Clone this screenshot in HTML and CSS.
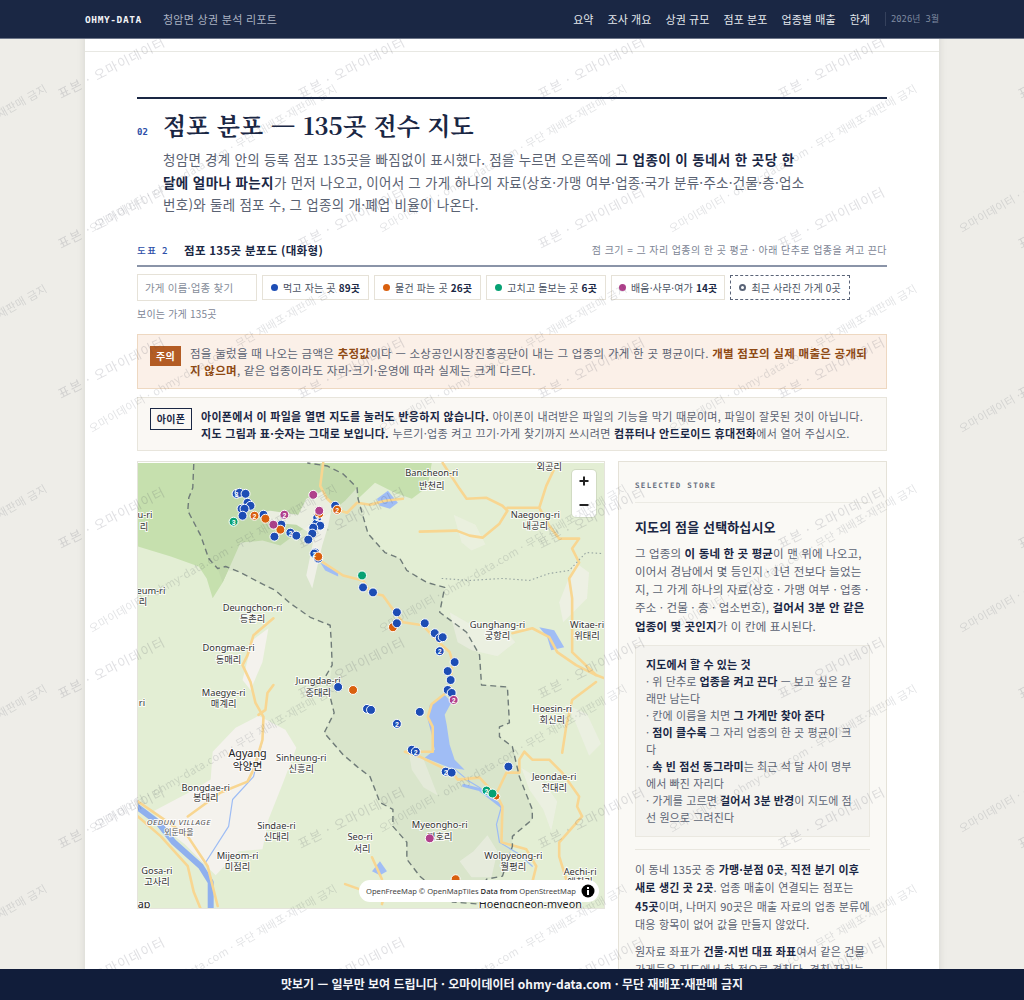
FILE: index.html
```html
<!DOCTYPE html>
<html lang="ko">

<head>
  <meta charset="utf-8">
  <title>청암면 상권 분석 리포트</title>
  <link rel="stylesheet" href="styles.css">
</head>

<body>
  <nav class="topnav">
    <span class="brand">OHMY-DATA</span>
    <span class="subtitle">청암면 상권 분석 리포트</span>
    <div class="nav-links">
      <a>요약</a><a>조사 개요</a><a>상권 규모</a><a>점포 분포</a><a>업종별 매출</a><a>한계</a>
    </div>
    <span class="nav-date">2026년 3월</span>
  </nav>

  <main class="paper">
    <div class="paper-top"></div>
    <section class="section">
      <div class="section-head">
        <span class="section-no">02</span>
        <h2>점포 분포 — 135곳 전수 지도</h2>
      </div>
      <p class="lead">청암면 경계 안의 등록 점포 135곳을 빠짐없이 표시했다. 점을 누르면 오른쪽에 <b>그 업종이 이 동네서 한 곳당 한 달에 얼마나 파는지</b>가 먼저 나오고, 이어서 그 가게 하나의 자료(상호·가맹 여부·업종·국가 분류·주소·건물·층·업소번호)와 둘레 점포 수, 그 업종의 개·폐업 비율이 나온다.</p>

      <div class="fig-head">
        <span class="fig-no">도표 2</span>
        <span class="fig-title">점포 135곳 분포도 (대화형)</span>
        <span class="fig-note">점 크기 = 그 자리 업종의 한 곳 평균 · 아래 단추로 업종을 켜고 끈다</span>
      </div>

      <div class="controls">
        <input type="text" class="search" placeholder="가게 이름·업종 찾기">
        <button class="chip"><i class="dot dot-eat"></i>먹고 자는 곳 <b>89곳</b></button>
        <button class="chip"><i class="dot dot-shop"></i>물건 파는 곳 <b>26곳</b></button>
        <button class="chip"><i class="dot dot-fix"></i>고치고 돌보는 곳 <b>6곳</b></button>
        <button class="chip chip-edu"><i class="dot dot-edu"></i>배움·사무·여가 <b>14곳</b></button>
        <button class="chip chip-closed"><i class="dot dot-closed"></i>최근 사라진 가게 0곳</button>
      </div>
      <p class="visible-count">보이는 가게 135곳</p>

      <div class="notice notice-warn">
        <span class="badge badge-warn">주의</span>
        <p>점을 눌렀을 때 나오는 금액은 <b>추정값</b>이다 — 소상공인시장진흥공단이 내는 그 업종의 가게 한 곳 평균이다. <b>개별 점포의 실제 매출은 공개되지 않으며</b>, 같은 업종이라도 자리·크기·운영에 따라 실제는 크게 다르다.</p>
      </div>
      <div class="notice notice-ios">
        <span class="badge badge-ios">아이폰</span>
        <p><b>아이폰에서 이 파일을 열면 지도를 눌러도 반응하지 않습니다.</b> 아이폰이 내려받은 파일의 기능을 막기 때문이며, 파일이 잘못된 것이 아닙니다. <b>지도 그림과 표·숫자는 그대로 보입니다.</b> 누르기·업종 켜고 끄기·가게 찾기까지 쓰시려면 <b>컴퓨터나 안드로이드 휴대전화</b>에서 열어 주십시오.</p>
      </div>

      <div class="map-row">
        <div class="map">
          <svg class="map-svg" viewBox="137 462 468 447" width="466" height="447">
            <rect class="land" x="137" y="462" width="468" height="447"/>
            <path class="forest" d="M137 462H432L428 486L412 498L395 492L375 482L358 498L330 512L300 530L280 545L262 540L240 542L232 560L222 582L212 598L206 578L198 566L170 556L137 546Z"/>
            <path class="park" d="M193 462L192 487L188 497L187 510L200 535L208 558L217 568L240 572L255 580L275 590L290 603L310 617L330 625L331 640L332 665L328 690L334 713L324 733L343 755L357 767L370 777L380 803L393 810L393 827L407 843L407 860L420 877L433 888L453 903L480 905L487 880L503 877L513 847L513 837L533 820L533 810L520 777L513 747L500 737L500 727L510 723L508 687L482 685L480 655L467 632L440 612L445 587L427 582L407 570L400 558L385 552L368 533L358 498L357 487L343 473L327 465L307 462Z"/>
            <path class="forest-dark" d="M193 462L192 487L188 497L187 510L200 535L208 558L217 568L222 582L232 560L240 542L262 540L280 545L300 530L330 512L345 500L357 487L343 473L327 465L307 462Z"/>

            <g class="urban">
              <path d="M212 752L235 728L258 716L285 730L296 748L282 785L268 820L262 850L238 852L215 876L207 868L184 845L165 830L152 812L190 792L210 780Z"/>
              <path d="M252 640L268 628L262 662L250 690L242 680Z"/>
              <path d="M306 498L322 490L332 505L328 525L322 545L312 588L306 575L314 535L296 524L272 522L258 512L270 510L298 514Z" opacity=".8"/>
              <path d="M450 612L478 628L498 620L516 642L498 656L472 650L458 642Z" opacity=".5"/>
              <path d="M576 562L590 572L588 598L578 608L564 622L560 602Z" opacity=".6"/>
              <path d="M522 768L544 782L558 802L552 832L544 810L530 790Z" opacity=".5"/>
              <path d="M408 748L424 760L438 796L424 788L412 770Z" opacity=".4"/>
              <path d="M488 836L498 852L492 878L472 878L460 862L474 852Z" opacity=".5"/>
              <path d="M454 514L476 524L486 544L472 550L462 542Z" opacity=".4"/>
              <path d="M566 704L588 714L602 744L590 756L576 722Z" opacity=".5"/>
            </g>

            <g class="river-thin">
              <path d="M262 740L253 777L232 800L228 827L205 863"/>
              <path d="M452 767L470 782L480 788L502 807L497 825L500 843L520 855L533 867"/>
            </g>
            <path class="river" d="M137 808L157 823L173 843L200 867L210 883V910"/>
            <path class="river-mid" d="M464 786L480 790L502 807"/>
            <g class="water">
              <path d="M430 705L445 695L452 702L445 715L447 725L450 745L455 760L465 770L450 768L440 764L425 758L435 750L432 735L428 720Z"/>
              <path d="M377 498L388 490L398 502L390 508L380 505Z"/>
              <path d="M540 627L555 630L565 647L552 650L548 637Z"/>
              <path d="M320 562L338 572V576L325 570Z"/>
              <path d="M372 872L380 862L387 872L380 876Z"/>
            </g>

            <g class="road">
              <path d="M443 462L460 488L467 498L487 497L503 505L508 510L500 523L483 537L470 535L457 530L420 531"/>
              <path d="M555 468L547 485L540 507H508M540 507L550 525L560 538L580 538L573 548L580 562L570 578L573 598L573 622L573 652L597 675L605 678"/>
              <path d="M513 633L533 628L550 637L558 652L577 665L597 675"/>
              <path d="M323 462L320 485L327 498L340 510L347 512L357 502L370 504L385 500L403 498"/>
              <path d="M320 560L343 575L363 580L370 592L383 595L390 605L403 622L423 625L437 640L450 652L453 662L450 690L432 704L428 717L433 727L433 752L405 752L420 757L453 773L458 780L480 778L498 797L503 807L502 843L527 850L537 867L533 883"/>
              <path d="M498 792L507 773L520 773L520 760L525 752L533 760L550 760L563 773L580 797L578 807L583 817L560 843L560 857L567 880"/>
              <path d="M597 682L573 700L567 727L563 753"/>
              <path d="M273 618L253 635L247 655L242 665L250 682L255 703L263 717L262 740L253 770L247 782L220 793L187 817"/>
              <path d="M273 685L267 693L265 710L258 715"/>
              <path d="M137 802L163 820L187 837L207 867L217 907"/>
              <path d="M137 817L160 837L187 867L193 893L200 910"/>
              <path d="M345 885L365 892"/>
              <path d="M372 858L382 880M387 885L382 905"/>
            </g>

            <path class="boundary" d="M193 463L192 487L188 497L187 510L200 535L208 558L217 568L225 566L240 572L255 580L275 590L290 603L310 617L330 625L331 640L332 665L325 677L334 713L324 733L343 755L357 767L370 777L380 803L393 810L393 827L407 843L407 860L420 877L433 888L453 903L480 905L487 880L503 877L513 847L513 837L533 820L533 810L520 777L513 747L500 737L500 727L510 723L508 687L482 685L480 655L467 632L440 612L445 587L427 582L407 570L400 558L385 552L368 533L358 498L357 487L343 473L327 465L307 462"/>
            <path class="dotted" d="M442 578L470 580L503 578L530 580L550 573L570 570L587 552L603 553"/>

            <g class="labels">
              <text x="432" y="475">Bancheon-ri</text><text x="432" y="488">반천리</text>
              <text x="550" y="469">외공리</text>
              <text x="536" y="517">Naegong-ri</text><text x="536" y="528">내공리</text>
              <text x="498" y="628">Gunghang-ri</text><text x="498" y="639">궁항리</text>
              <text x="588" y="628">Witae-ri</text><text x="588" y="639">위태리</text>
              <text x="144" y="517">u-ri</text><text x="143" y="529">리</text>
              <text x="150" y="594">eum-ri</text><text x="142" y="605">리</text>
              <text x="252" y="611">Deungchon-ri</text><text x="252" y="622">등촌리</text>
              <text x="228" y="651">Dongmae-ri</text><text x="228" y="663">동매리</text>
              <text x="318" y="684">Jungdae-ri</text><text x="318" y="696">중대리</text>
              <text x="223" y="696">Maegye-ri</text><text x="223" y="707">매계리</text>
              <text x="141" y="706">ri</text>
              <text class="town" x="247" y="757">Agyang</text><text class="town" x="247" y="770">악양면</text>
              <text x="301" y="761">Sinheung-ri</text><text x="301" y="772">신흥리</text>
              <text x="205" y="791">Bongdae-ri</text><text x="205" y="802">봉대리</text>
              <text class="village" x="178" y="826">OEDUN VILLAGE</text><text class="village-ko" x="178" y="836">외둔마을</text>
              <text x="276" y="830">Sindae-ri</text><text x="276" y="841">신대리</text>
              <text x="360" y="841">Seo-ri</text><text x="362" y="853">서리</text>
              <text x="237" y="860">Mijeom-ri</text><text x="237" y="871">미점리</text>
              <text x="156" y="875">Gosa-ri</text><text x="156" y="886">고사리</text>
              <text class="town" x="143" y="909">ap</text>
              <text x="553" y="712">Hoesin-ri</text><text x="553" y="723">회신리</text>
              <text x="555" y="780">Jeondae-ri</text><text x="555" y="791">전대리</text>
              <text x="440" y="829">Myeongho-ri</text><text x="440" y="841">명호리</text>
              <text x="514" y="860">Wolpyeong-ri</text><text x="514" y="871">월평리</text>
              <text x="581" y="876">Aechi-ri</text><text x="581" y="886">애치리</text>
              <text class="town" x="531" y="909">Hoengcheon-myeon</text>
            </g>

            <g class="stores">
              <g class="m-eat">
                <circle cx="236" cy="493" r="4.5"/><circle cx="239" cy="492" r="4.5"/><circle cx="245" cy="493" r="4.5"/><circle cx="247" cy="502" r="4.5"/><circle cx="250" cy="505" r="4.5"/><circle cx="241" cy="508" r="4.5"/><circle cx="244" cy="508" r="4.5"/><circle cx="242" cy="515" r="4.5"/>
                <circle cx="263" cy="514" r="4.5"/><circle cx="281" cy="524" r="4.5"/><circle cx="274" cy="536" r="4.5"/><circle cx="290" cy="532" r="4.5"/><circle cx="296" cy="535" r="4.5"/>
                <circle cx="317" cy="517" r="4.5"/><circle cx="316" cy="523" r="4.5"/><circle cx="320" cy="525" r="4.5"/><circle cx="313" cy="527" r="4.5"/><circle cx="312" cy="533" r="4.5"/><circle cx="308" cy="539" r="4.5"/><circle cx="315" cy="552" r="4.5"/><circle cx="314" cy="553" r="4.5"/><circle cx="318" cy="558" r="4.5"/><circle cx="335" cy="505" r="4.5"/>
                <circle cx="363" cy="587" r="4.5"/><circle cx="373" cy="592" r="4.5"/><circle cx="397" cy="612" r="4.5"/><circle cx="425" cy="623" r="4.5"/><circle cx="435" cy="633" r="4.5"/><circle cx="440" cy="638" r="4.5"/><circle cx="443" cy="637" r="4.5"/><circle cx="440" cy="651" r="4.5"/><circle cx="455" cy="662" r="4.5"/><circle cx="448" cy="671" r="4.5"/><circle cx="451" cy="680" r="4.5"/>
                <circle cx="338" cy="687" r="4.5"/><circle cx="367" cy="709" r="4.5"/><circle cx="371" cy="710" r="4.5"/><circle cx="448" cy="690" r="4.5"/><circle cx="452" cy="693" r="4.5"/><circle cx="420" cy="712" r="4.5"/><circle cx="397" cy="724" r="4.5"/><circle cx="412" cy="750" r="4.5"/><circle cx="416" cy="752" r="4.5"/><circle cx="446" cy="772" r="4.5"/><circle cx="452" cy="773" r="4.5"/><circle cx="509" cy="767" r="4.5"/>
              </g>
              <g class="m-shop">
                <circle cx="254" cy="515" r="4.5"/><circle cx="265" cy="518" r="4.5"/><circle cx="280" cy="529" r="4.5"/><circle cx="319" cy="513" r="4.5"/><circle cx="318" cy="556" r="4.5"/><circle cx="337" cy="509" r="4.5"/><circle cx="393" cy="627" r="4.5"/><circle cx="353" cy="690" r="4.5"/><circle cx="497" cy="797" r="3.5"/><circle cx="456" cy="880" r="4.5"/>
              </g>
              <circle class="m-eat" cx="397" cy="623" r="4.5"/>
              <g class="m-fix">
                <circle cx="233" cy="521" r="4.5"/><circle cx="362" cy="575" r="4.5"/><circle cx="487" cy="791" r="4.5"/><circle cx="493" cy="794" r="4.5"/>
              </g>
              <g class="m-edu">
                <circle cx="273" cy="524" r="4.5"/><circle cx="284" cy="514" r="4.5"/><circle cx="313" cy="494" r="4.5"/><circle cx="319" cy="510" r="4.5"/><circle cx="454" cy="700" r="4.5"/><circle cx="430" cy="839" r="4.5"/>
              </g>
              <g class="counts">
                <text x="236" y="496">3</text><text x="233" y="524">3</text><text x="254" y="518">2</text><text x="284" y="517">2</text><text x="290" y="535">2</text><text x="317" y="520">2</text><text x="314" y="556">2</text><text x="337" y="512">2</text><text x="440" y="654">2</text><text x="454" y="703">2</text><text x="397" y="727">2</text><text x="416" y="755">2</text><text x="446" y="775">2</text><text x="487" y="794">2</text>
              </g>
            </g>
          </svg>
          <div class="zoom-ctl">
            <button class="zoom-btn"><svg viewBox="0 0 12 12" width="12" height="12"><path d="M6 1.5V10.5M1.5 6H10.5"/></svg></button>
            <button class="zoom-btn"><svg viewBox="0 0 12 12" width="12" height="12"><path d="M1.5 6H10.5"/></svg></button>
          </div>
          <div class="attrib">
            <span>OpenFreeMap © OpenMapTiles <b>Data from</b> OpenStreetMap</span>
            <svg class="info" viewBox="0 0 14 14" width="14" height="14"><circle cx="7" cy="7" r="6.5"/><rect x="6" y="6" width="2" height="5"/><rect x="6" y="3" width="2" height="2"/></svg>
          </div>
        </div>

        <aside class="panel">
          <div class="panel-label">SELECTED STORE</div>
          <h3>지도의 점을 선택하십시오</h3>
          <p>그 업종의 <b>이 동네 한 곳 평균</b>이 맨 위에 나오고, 이어서 경남에서 몇 등인지 · 1년 전보다 늘었는지, 그 가게 하나의 자료(상호 · 가맹 여부 · 업종 · 주소 · 건물 · 층 · 업소번호), <b>걸어서 3분 안 같은 업종이 몇 곳인지</b>가 이 칸에 표시된다.</p>
          <div class="howto">
            <strong>지도에서 할 수 있는 것</strong>
            <div>· 위 단추로 <b>업종을 켜고 끈다</b> — 보고 싶은 갈래만 남는다</div>
            <div>· 칸에 이름을 치면 <b>그 가게만 찾아 준다</b></div>
            <div>· <b>점이 클수록</b> 그 자리 업종의 한 곳 평균이 크다</div>
            <div>· <b>속 빈 점선 동그라미</b>는 최근 석 달 사이 명부에서 빠진 자리다</div>
            <div>· 가게를 고르면 <b>걸어서 3분 반경</b>이 지도에 점선 원으로 그려진다</div>
          </div>
          <hr>
          <p class="fine">이 동네 135곳 중 <b>가맹·분점 0곳</b>, <b>직전 분기 이후 새로 생긴 곳 2곳</b>. 업종 매출이 연결되는 점포는 <b>45곳</b>이며, 나머지 90곳은 매출 자료의 업종 분류에 대응 항목이 없어 값을 만들지 않았다.</p>
          <p class="fine">원자료 좌표가 <b>건물·지번 대표 좌표</b>여서 같은 건물 가게들은 지도에서 한 점으로 겹친다. 겹친 자리는 숫자로 표시된다.</p>
        </aside>
      </div>
    </section>
  </main>

  <svg class="watermark" width="1024" height="1000">
    <defs>
      <pattern id="wm-big" width="240" height="150" patternUnits="userSpaceOnUse">
        <text transform="translate(61 99) rotate(-27)">표본 · 오마이데이터</text>
      </pattern>
      <g id="wm-line"><text class="wm-small" transform="translate(92 233) rotate(-30)">오마이데이터 · ohmy-data.com · 무단 재배포·재판매 금지</text></g>
      <pattern id="wm-small" width="290" height="200" patternUnits="userSpaceOnUse">
        <use href="#wm-line"/><use href="#wm-line" y="-200"/>
        <use href="#wm-line" x="-290"/><use href="#wm-line" x="-290" y="-200"/>
      </pattern>
    </defs>
    <rect width="1024" height="1000" fill="url(#wm-big)"/>
    <rect width="1024" height="1000" fill="url(#wm-small)"/>
  </svg>

  <footer class="preview-bar">맛보기 — 일부만 보여 드립니다 · 오마이데이터 ohmy-data.com · 무단 재배포·재판매 금지</footer>
</body>

</html>
```

FILE: styles.css
```css
:root {
  --navy: #1a2744;
  --navy-dark: #111d3a;
  --blue: #2d4fa8;
  --text: #5a6272;
  --muted: #7d8595;
  --line: #e5e2d8;
  --kr: "Noto Sans CJK KR", "Noto Sans", sans-serif;
  --mono: "DejaVu Sans Mono", "Noto Sans CJK KR", monospace;
}

* {
  box-sizing: border-box;
  margin: 0;
  padding: 0;
}

html,
body {
  height: 1000px;
  overflow: hidden;
}

body {
  font-family: var(--kr);
  background-color: #eeede8;
  color: var(--text);
}

b,
strong {
  color: var(--navy);
  font-weight: 700;
}

/* top bar */
.topnav {
  position: fixed;
  top: 0;
  left: 0;
  right: 0;
  height: 39px;
  padding: 0 85px;
  display: flex;
  align-items: center;
  background: var(--navy);
  border-bottom: 1px solid #6d7689;
  z-index: 20;
}

.brand {
  font-family: var(--mono);
  font-size: 9.5px;
  font-weight: 700;
  letter-spacing: 0.6px;
  color: #f2f3f6;
  margin-right: 21px;
}

.subtitle {
  font-size: 11px;
  color: #aab2c2;
  letter-spacing: 0.3px;
}

.nav-links {
  margin-left: auto;
  display: flex;
  gap: 14px;
  font-size: 11px;
  letter-spacing: 0.08px;
  color: #e4e7ed;
}

.nav-date {
  font-family: var(--mono);
  font-size: 8.8px;
  color: #7f8aa0;
  margin-left: 15px;
  padding-left: 5px;
  border-left: 1px solid #35415c;
  line-height: 14px;
  white-space: nowrap;
}

/* paper */
.paper {
  width: 854px;
  margin: 0 auto;
  min-height: 1000px;
  padding-top: 38px;
  background: #fff;
  box-shadow: 0 0 8px rgba(40, 40, 30, 0.12);
}

.paper-top {
  height: 14px;
  border-bottom: 1px solid #e8e8e3;
}

.section {
  padding: 45px 52px 0;
}

.section-head {
  display: flex;
  align-items: baseline;
  border-top: 2px solid var(--navy);
  padding-top: 6px;
}

.section-no {
  width: 26px;
  font-family: var(--mono);
  font-size: 9px;
  font-weight: 700;
  color: var(--blue);
}

h2 {
  font-family: "Noto Serif CJK KR", "Liberation Serif", "Noto Sans CJK KR", serif;
  font-size: 24px;
  line-height: 40px;
  font-weight: 700;
  color: var(--navy);
}

.lead {
  margin: 3px 0 0 26px;
  max-width: 642px;
  font-size: 13.5px;
  line-height: 22.5px;
  letter-spacing: 0.27px;
}

.lead b {
  letter-spacing: 0.4px;
}

.fig-head {
  display: flex;
  align-items: center;
  margin-top: 19px;
  height: 32px;
  border-bottom: 2px solid #8a94a8;
}

.fig-no {
  width: 47px;
  font-size: 9.5px;
  font-weight: 500;
  letter-spacing: 1.6px;
  color: var(--blue);
}

.fig-title {
  font-size: 11.5px;
  font-weight: 700;
  letter-spacing: 0.3px;
  color: var(--navy);
}

.fig-note {
  margin-left: auto;
  font-size: 10px;
  color: var(--muted);
  letter-spacing: 0.43px;
}

.controls {
  display: flex;
  align-items: center;
  margin-top: 7px;
  gap: 5px;
}

.search {
  width: 120px;
  height: 27px;
  padding: 0 7px;
  font-family: var(--kr);
  font-size: 10.5px;
  letter-spacing: 0.2px;
  background: #fff;
  border: 1px solid #e6e2d8;
}

.search::placeholder {
  color: #868d9a;
}

.chip {
  height: 25px;
  padding: 0 8px;
  display: flex;
  align-items: center;
  white-space: nowrap;
  font-family: var(--kr);
  font-size: 10px;
  letter-spacing: 0.15px;
  color: #4a5262;
  background: #fff;
  border: 1px solid #e6e2d8;
}

.chip b {
  margin-left: 3px;
}

.chip-edu {
  padding: 0 7px;
}

.chip-closed {
  border: 1px dashed #5a6478;
}

.dot {
  width: 7px;
  height: 7px;
  margin-right: 5px;
  border-radius: 50%;
}

.dot-eat {
  background: #1d4db5;
}

.dot-shop {
  background: #d9600f;
}

.dot-fix {
  background: #07a174;
}

.dot-edu {
  background: #b0408c;
}

.dot-closed {
  border: 2px solid #5a6478;
}

.visible-count {
  margin-top: 6px;
  font-size: 10px;
  line-height: 14px;
  letter-spacing: 0.2px;
  color: var(--muted);
}

.notice {
  display: flex;
  align-items: flex-start;
  padding: 10px 12px;
  line-height: 17.5px;
}

.notice p {
  flex: 1;
}

.notice-warn {
  margin-top: 13px;
  height: 55px;
  font-size: 11.5px;
  letter-spacing: 0.27px;
  background: #fbf0e8;
  border: 1px solid #eed8c1;
}

.notice-warn b {
  color: #8f4a14;
}

.notice-ios {
  margin-top: 8px;
  height: 54px;
  font-size: 11px;
  letter-spacing: 0.3px;
  background: #faf8f4;
  border: 1px solid #e8e5dc;
}

.badge {
  flex: none;
  text-align: center;
  font-size: 10px;
  font-weight: 700;
}

.badge-warn {
  width: 31px;
  height: 20px;
  line-height: 19px;
  margin: 1px 9px 0 0;
  color: #fff;
  background: #b35c24;
}

.badge-ios {
  width: 42px;
  height: 22px;
  line-height: 20px;
  margin-right: 9px;
  color: var(--navy);
  border: 1px solid var(--navy);
}

/* map and side panel */
.map-row {
  display: flex;
  align-items: flex-start;
  gap: 13px;
  margin-top: 10px;
}

.map {
  position: relative;
  flex: none;
  width: 468px;
  height: 448px;
  overflow: hidden;
  border: 1px solid #e5e4dc;
}

.map-svg {
  display: block;
}

.land {
  fill: #e3eed4;
}

.forest {
  fill: #c6e0ae;
}

.park {
  fill: #d9e5cb;
}

.forest-dark {
  fill: #c1d9ab;
}

.urban {
  fill: #f4f2ed;
}

.water {
  fill: #a0bdf5;
}

.river,
.river-mid,
.river-thin,
.road,
.boundary,
.dotted {
  fill: none;
  stroke-linejoin: round;
  stroke-linecap: round;
}

.river {
  stroke: #8fb0ee;
  stroke-width: 6;
}

.river-mid {
  stroke: #9dbcf4;
  stroke-width: 3;
}

.river-thin {
  fill: none;
  stroke: #9dbcf4;
  stroke-width: 1.2;
}

.road {
  stroke: #f8d691;
  stroke-width: 2.6;
}

.boundary {
  stroke: #6f7b78;
  stroke-width: 1.4;
  stroke-dasharray: 6 4;
  stroke-linecap: butt;
}

.dotted {
  stroke: #95a3a0;
  stroke-width: 1.1;
  stroke-dasharray: 1.5 2.5;
  stroke-linecap: butt;
}

.labels text {
  font-family: "Noto Sans", "Noto Sans CJK KR", sans-serif;
  font-size: 9.3px;
  text-anchor: middle;
  fill: #333;
  stroke: rgba(255, 255, 255, 0.85);
  stroke-width: 2px;
  paint-order: stroke;
}

.labels .town {
  font-size: 10.8px;
  fill: #222;
}

.labels .village {
  font-size: 8px;
  font-style: italic;
  letter-spacing: 0.6px;
  fill: #555;
}

.labels .village-ko {
  font-size: 8px;
  fill: #555;
}

.stores circle {
  stroke: #fff;
  stroke-width: 1;
}

.m-eat {
  fill: #1d4db5;
}

.m-shop {
  fill: #d9600f;
}

.m-fix {
  fill: #07a174;
}

.m-edu {
  fill: #b0408c;
}

.counts text {
  font-family: "Liberation Sans", sans-serif;
  font-size: 7px;
  font-weight: 700;
  text-anchor: middle;
  fill: #fff;
}

.zoom-ctl {
  position: absolute;
  top: 8px;
  right: 8px;
  width: 24px;
  background: #fff;
  border-radius: 4px;
  box-shadow: 0 0 0 1px rgba(0, 0, 0, 0.08);
}

.zoom-btn {
  display: flex;
  align-items: center;
  justify-content: center;
  width: 24px;
  height: 23.5px;
  background: none;
  border: none;
}

.zoom-btn path {
  fill: none;
  stroke: #222;
  stroke-width: 2;
}

.attrib {
  position: absolute;
  left: 221px;
  bottom: 6px;
  width: 240px;
  height: 22px;
  padding-left: 7px;
  display: flex;
  align-items: center;
  justify-content: space-between;
  font-family: "Noto Sans", sans-serif;
  font-size: 7.6px;
  white-space: nowrap;
  color: #444;
  background: #fff;
  border-radius: 11px;
}

.attrib b {
  font-weight: 500;
  color: #222;
}

.info {
  flex: none;
  margin-right: 4px;
}

.info circle {
  fill: #000;
}

.info rect {
  fill: #fff;
}

.panel {
  flex: 1;
  height: 640px;
  padding: 15px 16px;
  font-size: 11.5px;
  line-height: 18.3px;
  letter-spacing: 0.14px;
  background: #faf9f5;
  border: 1px solid var(--line);
}

.panel-label {
  padding-bottom: 8px;
  margin-top: 1px;
  font-family: var(--mono);
  font-size: 7.5px;
  line-height: 16px;
  font-weight: 700;
  letter-spacing: 1.3px;
  color: #697182;
  border-bottom: 1px solid #ecebe4;
}

.panel h3 {
  margin: 13px 0 6px;
  font-size: 13px;
  line-height: 22px;
  font-weight: 700;
  color: var(--navy);
}

.howto {
  margin-top: 10px;
  padding: 10px 10px 10px;
  font-size: 11px;
  line-height: 17px;
  letter-spacing: 0.1px;
  background: #f4f3ef;
  border: 1px solid #eae8e0;
}

.howto div {
  color: #5d6575;
}

.panel hr {
  margin: 12px 0 10px;
  border: none;
  border-top: 1px solid #e9e7df;
}

.panel .fine {
  font-size: 11px;
  letter-spacing: 0.2px;
}

.panel p + p {
  margin-top: 9px;
}

/* overlays */
.watermark {
  position: fixed;
  top: 0;
  left: 0;
  z-index: 10;
  pointer-events: none;
}

.watermark text {
  font-family: "Noto Sans CJK KR", sans-serif;
  font-size: 13px;
  letter-spacing: 1.1px;
  fill: rgba(60, 65, 80, 0.16);
}

.watermark .wm-small {
  font-size: 11px;
  letter-spacing: 0.35px;
  fill: rgba(60, 65, 80, 0.15);
}

.preview-bar {
  position: fixed;
  left: 0;
  right: 0;
  bottom: 0;
  height: 31px;
  line-height: 30px;
  text-align: center;
  font-size: 12px;
  font-weight: 700;
  color: #f4f5f8;
  background: var(--navy-dark);
  z-index: 20;
}
```
